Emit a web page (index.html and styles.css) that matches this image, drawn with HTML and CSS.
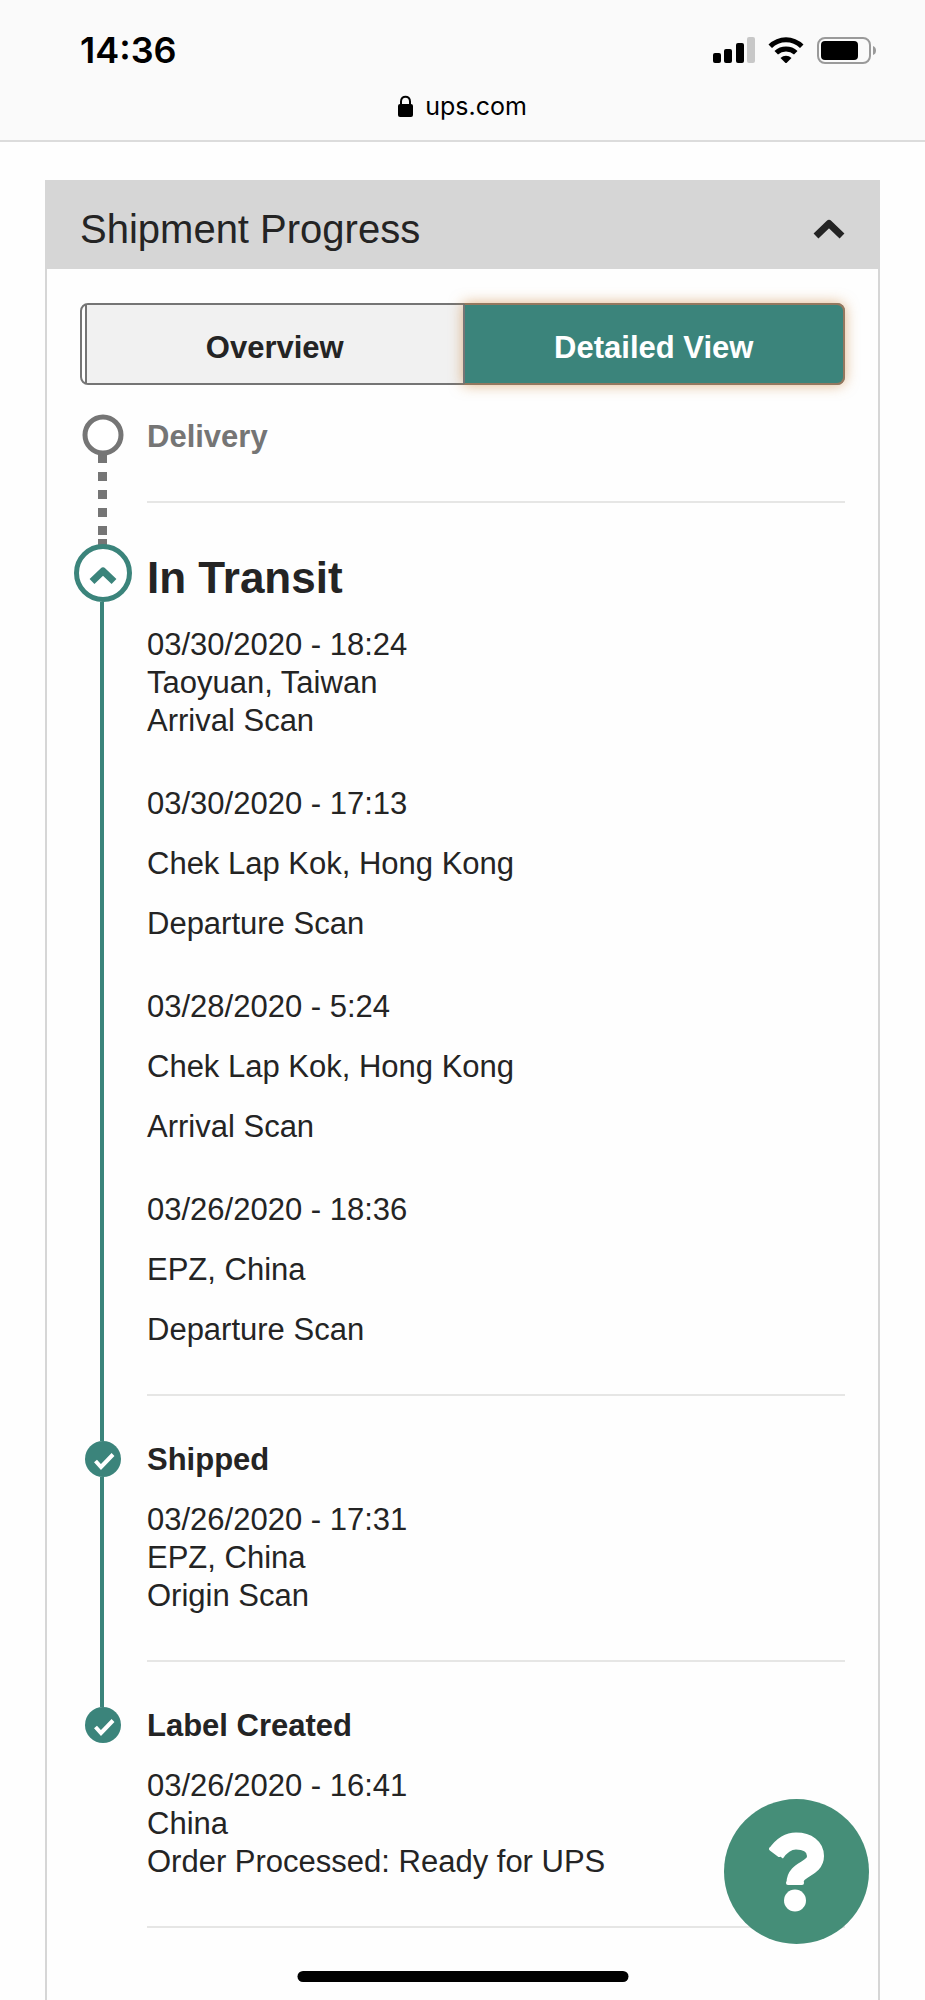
FILE: index.html
```html
<!DOCTYPE html>
<html lang="en">
<head>
    <meta charset="UTF-8">
    <meta name="viewport" content="width=device-width, initial-scale=1.0">
    <title>Shipment Progress</title>
    <link rel="stylesheet" href="styles.css">
</head>
<body>
    <!-- Browser bar -->
    <header class="browser-bar">
        <div class="status-row">
            <span class="time">14:36</span>
            <div class="status-icons">
                <svg width="42" height="26" viewBox="0 0 42 26">
                    <rect x="0" y="16" width="8" height="10" rx="2"/>
                    <rect x="11" y="12" width="8" height="14" rx="2"/>
                    <rect x="23" y="6" width="8" height="20" rx="2"/>
                    <rect x="34" y="0" width="8" height="26" rx="2" fill="#c8c8c8"/>
                </svg>
                <svg width="36" height="26" viewBox="0 0 36 26">
                    <path d="M0.5 7.5 A25 25 0 0 1 35.5 7.5 L32 11 A20 20 0 0 0 4 11 Z"/>
                    <path d="M6.5 14 A17 17 0 0 1 29.5 14 L26 17.5 A12 12 0 0 0 10 17.5 Z"/>
                    <path d="M12.5 21 A8 8 0 0 1 23.5 21 L18 26.5 Z"/>
                </svg>
                <svg width="60" height="27" viewBox="0 0 60 27">
                    <rect x="1" y="1" width="52" height="25" rx="7" fill="none" stroke="#9a9a9a" stroke-width="2"/>
                    <rect x="4" y="4" width="37" height="19" rx="4"/>
                    <path d="M56 9 Q59 10 59 13.5 Q59 17 56 18 Z" fill="#9a9a9a"/>
                </svg>
            </div>
        </div>
        <div class="url-row">
            <svg width="15" height="22" viewBox="0 0 15 22">
                <path d="M3 11 V6.5 C3 0 12 0 12 6.5 V11" fill="none" stroke="#000" stroke-width="2"/>
                <rect x="0" y="9" width="15" height="13" rx="2"/>
            </svg>
            <span>ups.com</span>
        </div>
    </header>

    <main class="page">
        <section class="card">
            <div class="card-header">
                <h1>Shipment Progress</h1>
                <button class="icon-button" type="button" aria-label="Collapse">
                    <svg width="32" height="20" viewBox="0 0 32 20">
                        <path d="M3 17 L16 4.5 L29 17" fill="none" stroke="#242424" stroke-width="7" stroke-linejoin="round"/>
                    </svg>
                </button>
            </div>

            <div class="card-body">
                <div class="view-switch">
                    <button class="view" type="button">Overview</button>
                    <button class="view active" type="button">Detailed View</button>
                </div>

                <ol class="timeline">
                    <li class="step pending">
                        <div class="rail">
                            <svg class="marker big" width="42" height="42" viewBox="0 0 42 42">
                                <circle cx="21" cy="21" r="18" fill="#fff" stroke="#757575" stroke-width="5"/>
                            </svg>
                            <div class="line dotted"></div>
                        </div>
                        <div class="details">
                            <h2>Delivery</h2>
                        </div>
                    </li>

                    <li class="step current">
                        <div class="rail">
                            <button class="icon-button marker big" type="button" aria-label="Hide scans">
                                <svg width="58" height="58" viewBox="0 0 58 58">
                                    <circle cx="29" cy="29" r="26.500" fill="#fff" stroke="#3b847b" stroke-width="5"/>
                                    <path d="M18 37.500 L29 27 L40 37.500" fill="none" stroke="#3b847b" stroke-width="7" stroke-linejoin="round"/>
                                </svg>
                            </button>
                            <div class="line"></div>
                        </div>
                        <div class="details">
                            <h2>In Transit</h2>
                            <div class="scan">
                                <p>03/30/2020 - 18:24</p>
                                <p>Taoyuan, Taiwan</p>
                                <p>Arrival Scan</p>
                            </div>
                            <div class="scan spaced">
                                <p>03/30/2020 - 17:13</p>
                                <p>Chek Lap Kok, Hong Kong</p>
                                <p>Departure Scan</p>
                            </div>
                            <div class="scan spaced">
                                <p>03/28/2020 - 5:24</p>
                                <p>Chek Lap Kok, Hong Kong</p>
                                <p>Arrival Scan</p>
                            </div>
                            <div class="scan spaced">
                                <p>03/26/2020 - 18:36</p>
                                <p>EPZ, China</p>
                                <p>Departure Scan</p>
                            </div>
                        </div>
                    </li>

                    <li class="step">
                        <div class="rail">
                            <svg class="marker" width="36" height="36" viewBox="0 0 36 36">
                                <circle cx="18" cy="18" r="18" fill="#3b847b"/>
                                <path d="M10.500 20 L16 26 L28 13.500" fill="none" stroke="#fff" stroke-width="4"/>
                            </svg>
                            <div class="line"></div>
                        </div>
                        <div class="details">
                            <h2>Shipped</h2>
                            <div class="scan">
                                <p>03/26/2020 - 17:31</p>
                                <p>EPZ, China</p>
                                <p>Origin Scan</p>
                            </div>
                        </div>
                    </li>

                    <li class="step">
                        <div class="rail">
                            <svg class="marker" width="36" height="36" viewBox="0 0 36 36">
                                <circle cx="18" cy="18" r="18" fill="#3b847b"/>
                                <path d="M10.500 20 L16 26 L28 13.500" fill="none" stroke="#fff" stroke-width="4"/>
                            </svg>
                        </div>
                        <div class="details">
                            <h2>Label Created</h2>
                            <div class="scan">
                                <p>03/26/2020 - 16:41</p>
                                <p>China</p>
                                <p>Order Processed: Ready for UPS</p>
                            </div>
                        </div>
                    </li>
                </ol>
            </div>
        </section>
    </main>

    <!-- Floating help button -->
    <button class="icon-button help" type="button" aria-label="Help">
        <svg width="145" height="145" viewBox="0 0 145 145">
            <circle cx="72.5" cy="72.5" r="72.5" fill="#458e78"/>
            <path d="M52 54.5 C58 46 64 42 72 42 C84 42 91.5 48 91.5 57 C91.5 71 71 69 71 84" fill="none" stroke="#fff" stroke-width="17"/>
            <path d="M47 50 L55 56" stroke="#fff" stroke-width="4" stroke-linecap="round"/>
            <path d="M64 84 H78" stroke="#fff" stroke-width="4" stroke-linecap="round"/>
            <circle cx="71" cy="101.5" r="11" fill="#fff"/>
        </svg>
    </button>
    <div class="home-indicator"></div>
</body>
</html>
```

FILE: styles.css
```css
body {
    margin: 0;
    min-height: 100vh;
    display: flex;
    flex-direction: column;
    font-family: "Liberation Sans", Arial, sans-serif;
    font-size: 31px;
    line-height: 38px;
    color: #242424;
    background-color: #fefefe;
}
h1, h2, p {
    margin: 0;
}
svg {
    display: block;
}
.icon-button {
    padding: 0;
    border: none;
    background: none;
    cursor: pointer;
}

/* Browser bar */
.browser-bar {
    padding: 30px 48px 16px 80px;
    color: #000;
    background-color: #fafafa;
    border-bottom: 2px solid #dcdcdc;
    font-family: Inter, sans-serif;
}
.status-row {
    display: flex;
    justify-content: space-between;
    align-items: center;
    height: 40px;
}
.time {
    font-size: 36px;
    font-weight: 600;
}
.status-icons {
    display: flex;
    align-items: center;
    gap: 13px;
}
.url-row {
    display: flex;
    justify-content: center;
    align-items: center;
    gap: 12px;
    margin-top: 18px;
    margin-right: 32px;
    font-size: 25px;
    line-height: 36px;
}

/* Card */
.page {
    flex: 1;
    display: flex;
    padding: 38px 45px 0;
}
.card {
    flex: 1;
    border: 2px solid #d6d6d6;
    border-bottom: none;
}
.card-header {
    display: flex;
    justify-content: space-between;
    align-items: center;
    padding: 24px 33px 17px;
    background-color: #d6d6d6;
}
.card-header h1 {
    font-size: 40px;
    font-weight: normal;
    line-height: 46px;
}
.card-body {
    padding: 34px 33px 0;
}

/* Overview / Detailed View */
.view-switch {
    display: grid;
    grid-template-columns: 1fr 1fr;
    height: 78px;
    border: 2px solid #757575;
    border-radius: 8px;
    background-color: #fff;
}
.view {
    margin-left: 3px;
    padding: 8px 0 0;
    border: none;
    border-left: 2px solid #757575;
    background-color: #f1f1f1;
    color: #242424;
    font-family: inherit;
    font-size: 31px;
    font-weight: bold;
    cursor: pointer;
}
.view.active {
    margin: -2px -2px -2px 0;
    border: 2px solid #94785f;
    border-left-color: #757575;
    border-radius: 0 8px 8px 0;
    background-color: #3b847b;
    color: #fff;
    box-shadow: 0 0 14px rgba(205, 135, 60, 0.6);
}

/* Timeline */
.timeline {
    list-style: none;
    margin: 33px 0 0 -7px;
    padding: 0;
}
.step {
    display: flex;
    gap: 14px;
}
.rail {
    width: 60px;
    display: flex;
    flex-direction: column;
    align-items: center;
}
.marker {
    position: relative;
    flex-shrink: 0;
}
.marker.big {
    margin-top: -4px;
}
.line {
    flex: 1;
    width: 4px;
    margin-right: 2px;
    background-color: #3b847b;
}
.line.dotted {
    width: 9px;
    margin-top: -2px;
    background: linear-gradient(#757575, #757575) bottom / 9px 9px no-repeat,
        repeating-linear-gradient(#757575 0 9px, transparent 9px 18px);
}
.details {
    flex: 1;
    padding-bottom: 45px;
    margin-bottom: 45px;
    border-bottom: 2px solid #e6e6e5;
}
.details h2 {
    font-size: 31px;
    line-height: 38px;
}
.pending h2 {
    color: #757575;
}
.current h2 {
    font-size: 44px;
    line-height: 60px;
}
.details h2 + .scan {
    margin-top: 22px;
}
.current h2 + .scan {
    margin-top: 18px;
}
.scan.spaced {
    display: flex;
    flex-direction: column;
    gap: 22px;
    margin-top: 45px;
}

/* Floating items */
.help {
    position: fixed;
    right: 56px;
    bottom: 56px;
}
.home-indicator {
    position: fixed;
    bottom: 18px;
    left: 50%;
    width: 331px;
    height: 11px;
    transform: translateX(-50%);
    border-radius: 6px;
    background-color: #000;
}
```
